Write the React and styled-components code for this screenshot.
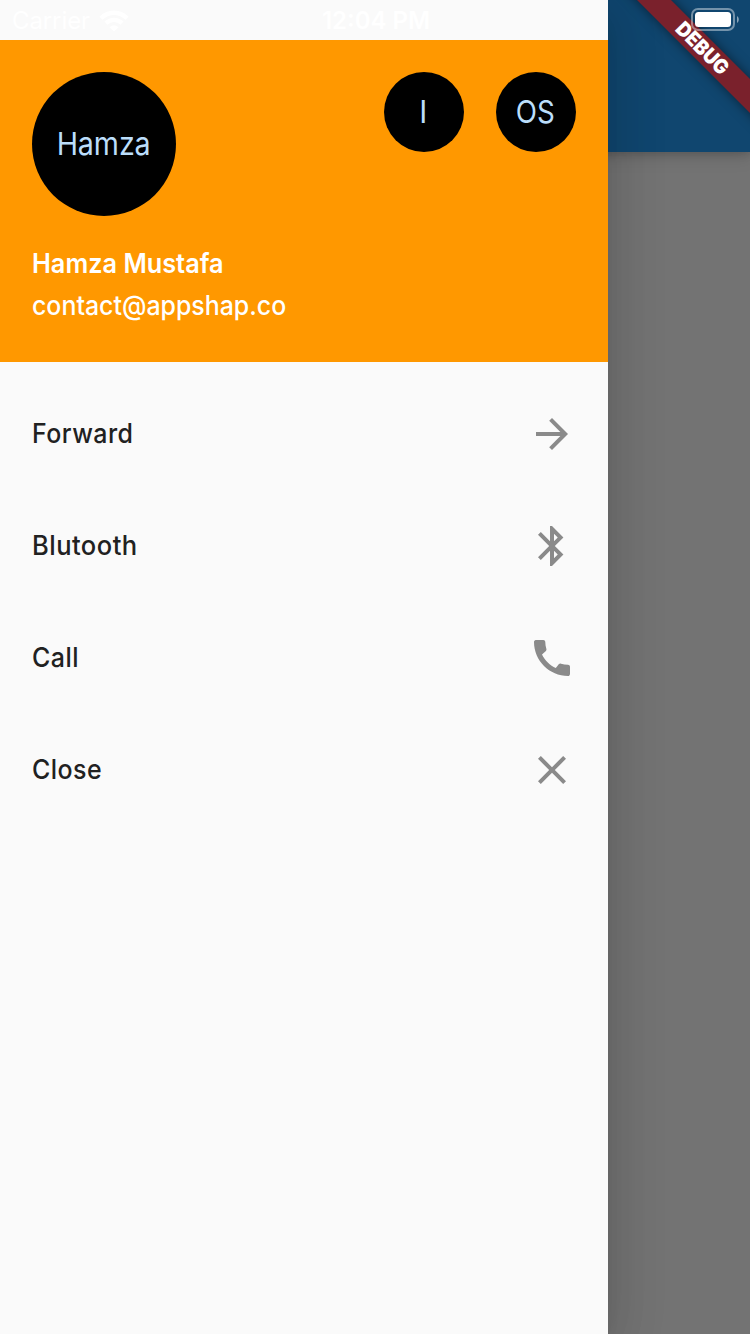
import React from "react";
import styled, { createGlobalStyle } from "styled-components";

const GlobalStyle = createGlobalStyle`
  * { box-sizing: border-box; }
  body { margin: 0; font-family: Inter, "Liberation Sans", sans-serif; }
`;

const Screen = styled.div`
  position: relative;
  display: flex;
  width: 750px;
  height: 1334px;
  overflow: hidden;
  background: #737373;
`;

const Drawer = styled.aside`
  position: relative;
  z-index: 1;
  flex: 0 0 608px;
  height: 100%;
  padding-top: 40px;
  background: #fafafa;
  box-shadow: 0 16px 20px -10px rgba(0, 0, 0, 0.12),
    0 12px 48px 4px rgba(0, 0, 0, 0.11), 0 12px 60px 10px rgba(0, 0, 0, 0.06);
`;

const Page = styled.main`
  flex: 1;
`;

const AppBar = styled.div`
  height: 152px;
  margin-left: -40px;
  background: #10466f;
  box-shadow: 0 2px 8px rgba(0, 0, 0, 0.16), 0 6px 16px rgba(0, 0, 0, 0.1);
`;

const Header = styled.header`
  display: flex;
  flex-direction: column;
  height: 322px;
  padding: 32px 32px 0;
  background: #ff9800;
  color: #fff;
`;

const Avatars = styled.div`
  display: flex;
  align-items: flex-start;
  gap: 32px;
  height: 144px;
  margin-bottom: 26px;
`;

const Avatar = styled.div`
  display: flex;
  align-items: center;
  justify-content: center;
  flex: none;
  width: ${(p) => p.$size}px;
  height: ${(p) => p.$size}px;
  margin-right: ${(p) => (p.$lead ? "auto" : 0)};
  padding-right: 1.5px;
  border-radius: 50%;
  background: #000;
  color: #bbdefb;
`;

const Label = styled.span`
  display: block;
  white-space: nowrap;
  font-size: ${(p) => p.$size}px;
  line-height: ${(p) => p.$line || 42}px;
  font-weight: ${(p) => p.$weight || 400};
  letter-spacing: ${(p) => p.$spacing || 0}px;
  transform: scaleX(${(p) => p.$narrow || 1});
  transform-origin: ${(p) => p.$origin || "left"} center;
`;

const Menu = styled.nav`
  padding-top: 16px;
`;

const MenuRow = styled.div`
  display: flex;
  align-items: center;
  justify-content: space-between;
  height: 112px;
  padding: 0 32px;
  color: #212121;
`;

const MenuIcon = styled.svg`
  display: block;
  width: 48px;
  height: 48px;
  fill: #8a8a8a;
`;

const StatusBar = styled.div`
  position: absolute;
  z-index: 3;
  inset: 0 0 auto 0;
  display: grid;
  grid-template-columns: 1fr auto 1fr;
  align-items: center;
  height: 40px;
  padding: 0 10px 0 12px;
  color: #fff;
`;

const Carrier = styled.div`
  display: flex;
  align-items: center;
  gap: 9px;
`;

const Wifi = styled.svg`
  width: 30px;
  height: 22px;
  fill: none;
  stroke: #fff;
  stroke-width: 4.4;
`;

const Battery = styled.svg`
  justify-self: end;
  width: 50px;
  height: 24px;
  margin-bottom: 2px;
`;

const DebugBanner = styled.div`
  position: absolute;
  z-index: 2;
  left: 602px;
  top: 36px;
  display: flex;
  align-items: center;
  justify-content: center;
  width: 200px;
  height: 24px;
  transform: rotate(45deg);
  background: #7a212c;
  box-shadow: 0 0 12px rgba(0, 0, 0, 0.5);
  color: #fff;
`;

const items = [
  {
    label: "Forward",
    narrow: 0.925,
    path: "M12 4l-1.41 1.41L16.17 11H4v2h12.17l-5.58 5.59L12 20l8-8z",
  },
  {
    label: "Blutooth",
    narrow: 0.945,
    path: "M17.71 7.71L12 2h-1v7.59L6.41 5 5 6.41 10.59 12 5 17.59 6.41 19 11 14.41V22h1l5.71-5.71-4.3-4.29 4.3-4.29zM13 5.83l1.88 1.88L13 9.59V5.83zm1.88 10.46L13 18.17v-3.76l1.88 1.88z",
  },
  {
    label: "Call",
    narrow: 0.925,
    path: "M20.01 15.38c-1.23 0-2.42-.2-3.53-.56-.35-.12-.74-.03-1.01.24l-1.57 1.97c-2.83-1.35-5.48-3.9-6.89-6.83l1.95-1.66c.27-.28.35-.67.24-1.02-.37-1.11-.56-2.3-.56-3.53 0-.54-.45-.99-.99-.99H4.19C3.65 3 3 3.24 3 3.99 3 13.28 10.73 21 20.01 21c.71 0 .99-.63.99-1.18v-3.45c0-.54-.45-.99-.99-.99z",
  },
  {
    label: "Close",
    narrow: 0.925,
    path: "M19 6.41L17.59 5 12 10.59 6.41 5 5 6.41 10.59 12 5 17.59 6.41 19 12 13.41 17.59 19 19 17.59 13.41 12z",
  },
];

export default function App() {
  return (
    <>
      <GlobalStyle />
      <Screen>
        <Drawer>
          <Header>
            <Avatars>
              <Avatar $size={144} $lead>
                <Label $size={31.5} $narrow={0.91} $spacing={-0.1} $origin="center">Hamza</Label>
              </Avatar>
              <Avatar $size={80}>
                <Label $size={31.5} $narrow={0.95} $origin="center">I</Label>
              </Avatar>
              <Avatar $size={80}>
                <Label $size={31.5} $narrow={0.88} $spacing={0.2} $origin="center">OS</Label>
              </Avatar>
            </Avatars>
            <Label $size={27.5} $weight={600} $narrow={0.92}>Hamza Mustafa</Label>
            <Label $size={27} $weight={500} $narrow={0.922} $line={44}>contact@appshap.co</Label>
          </Header>
          <Menu>
            {items.map((item) => (
              <MenuRow key={item.label}>
                <Label $size={27} $weight={500} $narrow={item.narrow} $spacing={0.5}>
                  {item.label}
                </Label>
                <MenuIcon viewBox="0 0 24 24">
                  <path d={item.path} />
                </MenuIcon>
              </MenuRow>
            ))}
          </Menu>
        </Drawer>
        <Page>
          <AppBar />
        </Page>
        <DebugBanner>
          <Label $size={20.4} $weight={900} $narrow={0.92} $origin="center">DEBUG</Label>
        </DebugBanner>
        <StatusBar>
          <Carrier>
            <Label $size={24} $spacing={-0.1}>Carrier</Label>
            <Wifi viewBox="0 0 30 22">
              <path d="M2 8.2C9.2.9 20.8.9 28 8.2M7 13.2c4.6-4.4 11.4-4.4 16 0" />
              <path d="M10.5 17.2c2.6-2.3 6.4-2.3 9 0L15 21.6z" fill="#fff" stroke="none" />
            </Wifi>
          </Carrier>
          <Label $size={24} $weight={600}>12:04 PM</Label>
          <Battery viewBox="0 0 50 24">
            <rect x="2" y="1" width="42" height="21" rx="6" fill="none" stroke="#fff" strokeOpacity="0.42" strokeWidth="2" />
            <rect x="5" y="4" width="36" height="15" rx="3.5" fill="#fff" />
            <path d="M47 8c2.4 1.4 2.4 5.6 0 7z" fill="#fff" fillOpacity="0.5" />
          </Battery>
        </StatusBar>
      </Screen>
    </>
  );
}
